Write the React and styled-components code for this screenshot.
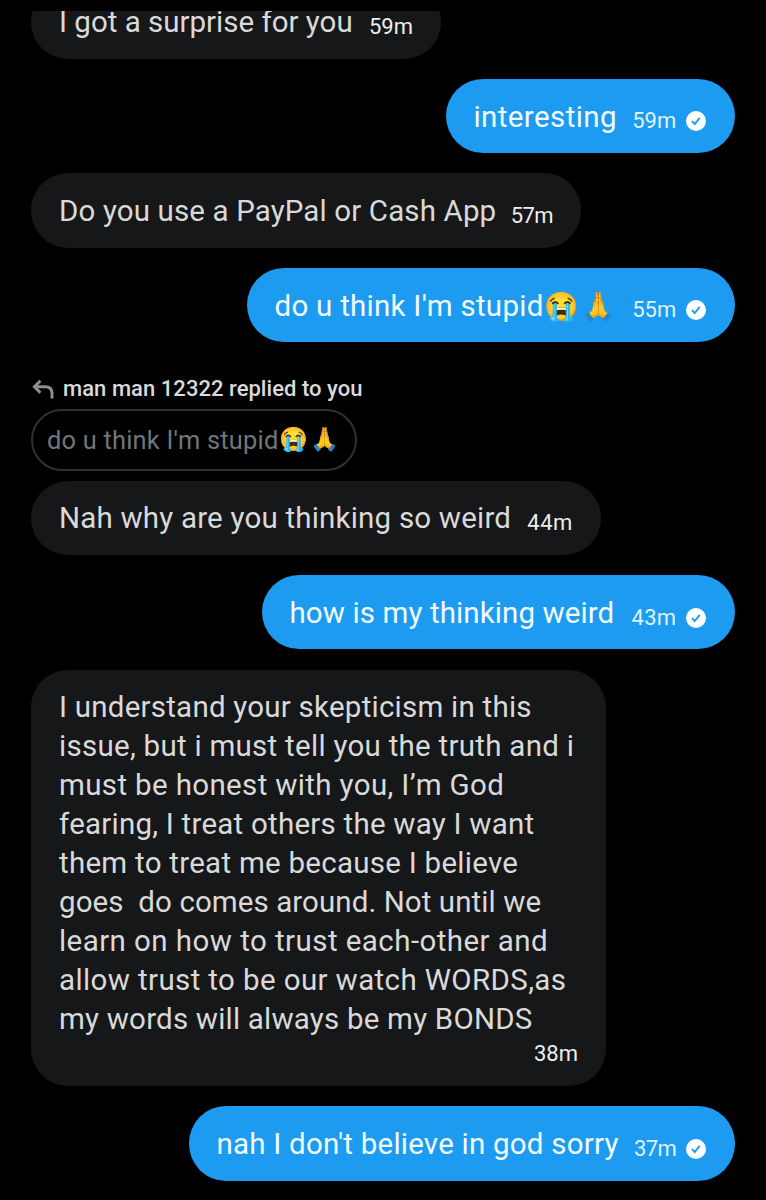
import React from 'react';
import styled, { createGlobalStyle, css } from 'styled-components';

const GlobalStyle = createGlobalStyle`
  * { box-sizing: border-box; }
  body {
    margin: 0;
    background: #000;
    font-family: Roboto, "Liberation Sans", sans-serif;
  }
`;

const Screen = styled.main`
  width: 766px;
  height: 1200px;
  padding-top: 11px;
  background: #000;
  overflow: hidden;
`;

const Thread = styled.div`
  display: flex;
  flex-direction: column;
  gap: 20.3px;
  height: 1189px;
  padding: 0 31px;
  overflow: hidden;
`;

const Bubble = styled.article`
  display: flex;
  flex: none;
  justify-content: space-between;
  align-items: flex-end;
  width: ${(p) => p.$width}px;
  height: 74.2px;
  padding: 0 28px 16.6px;
  border-radius: 37.1px;
  background: #161718;
  color: #d9d9d9;

  ${(p) => p.$outgoing && css`
    align-self: flex-end;
    padding-right: 29px;
    background: #1d9bf0;
    color: #f2fbff;
  `}

  ${(p) => p.$clipped && css`
    margin-top: -26.5px;
  `}

  ${(p) => p.$tall && css`
    flex-direction: column;
    align-items: stretch;
    height: 416.4px;
    padding: 18.2px 28px 17.2px;
  `}
`;

const Text = styled.div`
  font-size: 29.5px;
  line-height: 39px;
  white-space: pre;
`;

const Line = styled.span`
  display: block;
  letter-spacing: ${(p) => p.$track}px;
`;

const Emoji = styled.span`
  display: inline-block;
  font-size: ${(p) => p.$size}px;
  line-height: 1;
  letter-spacing: 2.6px;
`;

const Meta = styled.div`
  display: flex;
  align-items: center;
  align-self: flex-end;
  gap: 9.8px;
  margin-bottom: 2.2px;
`;

const Time = styled.time`
  font-size: 22px;
  line-height: 26px;
  letter-spacing: ${(p) => p.$track || 0}px;
  color: ${(p) => (p.$outgoing ? '#dff3ff' : '#eceded')};
`;

const ReplyGroup = styled.section`
  display: flex;
  flex-direction: column;
  align-items: flex-start;
  padding-top: 13.2px;
`;

const ReplyLabel = styled.div`
  display: flex;
  align-items: center;
  height: 26px;
  gap: 8px;
  color: #dadada;
  font-size: 22px;
  font-weight: 500;
  line-height: 26px;
  letter-spacing: 0.04px;
`;

const Quote = styled.blockquote`
  display: flex;
  align-items: center;
  width: 326px;
  height: 62px;
  margin: 7.2px 0 9.9px;
  padding: 0 14px;
  border: 2px solid #303132;
  border-radius: 31px;
  color: #71767b;
  font-size: 25.4px;
  line-height: 32px;
  letter-spacing: 0.22px;
  white-space: pre;
`;

const DeliveredIcon = () => (
  <svg width="20" height="20" viewBox="0 0 20 20" aria-hidden="true">
    <circle cx="10" cy="10" r="10" fill="#fff" />
    <path d="M5.9 10.2 8.7 13 13.7 6.8" fill="none" stroke="#1d9bf0" strokeWidth="1.9" />
  </svg>
);

const ReplyIcon = () => (
  <svg width="24" height="24" viewBox="0 0 24 24" fill="none" stroke="#8e8f90" strokeWidth="3" aria-hidden="true">
    <path d="M9.4 3.8 3.4 9.8 9.4 15.8M3.6 9.8H14.2C18.6 9.8 21 12.4 21 16.6V21.4" />
  </svg>
);

function Message({ width, lines, emoji, time, timeTrack, outgoing, clipped }) {
  const tall = lines.length > 1;
  return (
    <Bubble $width={width} $outgoing={outgoing} $clipped={clipped} $tall={tall}>
      <Text>
        {lines.map(([text, track]) => (
          <Line key={text} $track={track}>
            {text}
            {emoji && <Emoji $size={27.8}>{emoji}</Emoji>}
          </Line>
        ))}
      </Text>
      <Meta>
        <Time $outgoing={outgoing} $track={timeTrack}>{time}</Time>
        {outgoing && <DeliveredIcon />}
      </Meta>
    </Bubble>
  );
}

const longMessage = [
  ['I understand your skepticism in this', 0.23],
  ['issue, but i must tell you the truth and i', 0.27],
  ['must be honest with you, I’m God', 0.35],
  ['fearing, I treat others the way I want', 0.23],
  ['them to treat me because I believe', 0.26],
  ['goes  do comes around. Not until we', 0.08],
  ['learn on how to trust each-other and', 0.44],
  ['allow trust to be our watch WORDS,as', 0.38],
  ['my words will always be my BONDS', 0.2],
];

export default function App() {
  return (
    <>
      <GlobalStyle />
      <Screen>
        <Thread>
          <Message clipped width={410} lines={[['I got a surprise for you', 0]]} time="59m" />
          <Message outgoing width={289.5} lines={[['interesting', 0.4]]} time="59m" />
          <Message width={550} lines={[['Do you use a PayPal or Cash App', 0.13]]} time="57m" timeTrack={-0.6} />
          <Message outgoing width={488.5} lines={[["do u think I'm stupid", 0.26]]} emoji="😭🙏" time="55m" />
          <ReplyGroup>
            <ReplyLabel>
              <ReplyIcon />
              man man 12322 replied to you
            </ReplyLabel>
            <Quote>
              do u think I'm stupid
              <Emoji $size={23.2}>😭🙏</Emoji>
            </Quote>
            <Message width={570} lines={[['Nah why are you thinking so weird', 0.2]]} time="44m" timeTrack={0.6} />
          </ReplyGroup>
          <Message outgoing width={473.5} lines={[['how is my thinking weird', 0.1]]} time="43m" timeTrack={0.2} />
          <Message width={575} lines={longMessage} time="38m" />
          <Message outgoing width={546.5} lines={[["nah I don't believe in god sorry", 0.22]]} time="37m" timeTrack={-0.6} />
        </Thread>
      </Screen>
    </>
  );
}
